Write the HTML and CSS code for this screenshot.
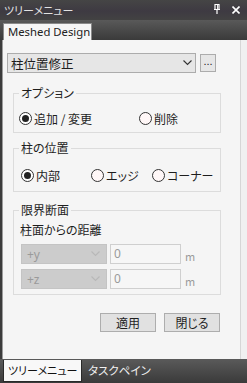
FILE: index.html
```html
<!DOCTYPE html>
<html lang="ja">
<head>
  <meta charset="UTF-8" />
  <title>ツリーメニュー</title>
  <link rel="stylesheet" href="styles.css">
</head>
<body>
  <div class="window">
    <div class="titlebar">
      <span class="title">ツリーメニュー</span>
      <span class="tools">
        <svg class="pin" width="8" height="10" viewBox="0 0 8 10">
          <path d="M2 0.5h4v5h-4z M1 5.5h6 M4 5.5v4.5" fill="none" stroke="#fff" stroke-width="1.2"/>
          <path d="M4.6 1v4.5" stroke="#fff" stroke-width="1"/>
        </svg>
        <svg class="close" width="8" height="8" viewBox="0 0 8 8">
          <path d="M0.5 0.5l7 7 M7.5 0.5l-7 7" stroke="#fff" stroke-width="1.6"/>
        </svg>
      </span>
    </div>

    <div class="tabstrip">
      <div class="tab">Meshed Design</div>
    </div>

    <div class="panel">
      <div class="content">
        <!-- コマンド選択 -->
        <div class="cmd-row">
          <div class="select main">
            <span>柱位置修正</span>
            <svg width="9" height="6" viewBox="0 0 9 6"><path d="M0.5 0.5l4 4 4-4" fill="none" stroke="#333" stroke-width="1.1"/></svg>
          </div>
          <button class="more">...</button>
        </div>

        <!-- オプション -->
        <fieldset class="group g-option">
          <legend>オプション</legend>
          <div class="radios">
            <label class="radio-item"><span class="radio checked"></span>追加 / 変更</label>
            <label class="radio-item"><span class="radio"></span>削除</label>
          </div>
        </fieldset>

        <!-- 柱の位置 -->
        <fieldset class="group g-position">
          <legend>柱の位置</legend>
          <div class="radios">
            <label class="radio-item"><span class="radio checked"></span>内部</label>
            <label class="radio-item"><span class="radio"></span>エッジ</label>
            <label class="radio-item"><span class="radio"></span>コーナー</label>
          </div>
        </fieldset>

        <!-- 限界断面 -->
        <fieldset class="group g-section">
          <legend>限界断面</legend>
          <div class="sub-label">柱面からの距離</div>
          <div class="dist-row">
            <div class="select disabled">
              <span>+y</span>
              <svg width="9" height="6" viewBox="0 0 9 6"><path d="M0.5 0.5l4 4 4-4" fill="none" stroke="#b8b8b8" stroke-width="1.1"/></svg>
            </div>
            <div class="num">0</div>
            <span class="unit">m</span>
          </div>
          <div class="dist-row">
            <div class="select disabled">
              <span>+z</span>
              <svg width="9" height="6" viewBox="0 0 9 6"><path d="M0.5 0.5l4 4 4-4" fill="none" stroke="#b8b8b8" stroke-width="1.1"/></svg>
            </div>
            <div class="num">0</div>
            <span class="unit">m</span>
          </div>
        </fieldset>

        <div class="actions">
          <button class="btn">適用</button>
          <button class="btn">閉じる</button>
        </div>
      </div>
    </div>

    <div class="bottom-tabs">
      <div class="btab active">ツリーメニュー</div>
      <div class="btab">タスクペイン</div>
    </div>
  </div>
</body>
</html>
```

FILE: styles.css
```css
body {
  margin: 0;
  background: #3c3c3c;
  font-family: "Noto Sans CJK JP", "Noto Sans", sans-serif;
  font-feature-settings: "palt";
  font-size: 12px;
  color: #1e1e1e;
}
.window {
  width: 247px;
  height: 383px;
  overflow: hidden;
}

/* タイトルバー */
.titlebar {
  height: 20px;
  background: linear-gradient(#454545, #3e3a42 55%, #424242);
  display: flex;
  align-items: center;
  justify-content: space-between;
  padding: 0 7px 0 4px;
}
.title {
  color: #e2e2e2;
  font-size: 11px;
  line-height: 20px;
}
.tools {
  display: flex;
  align-items: center;
  gap: 11px;
}
.pin {
  margin-top: -2px;
}

/* タブ */
.tabstrip {
  height: 20px;
  background: linear-gradient(#595959, #3a3a3a);
  display: flex;
  align-items: flex-end;
  padding-left: 3px;
}
.tab {
  width: 89px;
  height: 17px;
  box-sizing: border-box;
  background: #f6f6f6;
  border: 1px solid #8a8a8a;
  border-bottom: none;
  font-family: "Noto Sans", sans-serif;
  font-size: 11.3px;
  line-height: 16px;
  padding-left: 4px;
  white-space: nowrap;
  color: #222;
}

/* パネル */
.panel {
  margin-left: 2px;
  width: 245px;
  height: 319px;
  box-sizing: border-box;
  background: #f0f0f0;
  border-left: 1px solid #9c9c9c;
}
.content {
  width: 238px;
  height: 100%;
  box-sizing: border-box;
  background: #f5f5f5;
  border-right: 1px solid #d6d6d6;
  padding-top: 13px;
}
.cmd-row {
  display: flex;
  align-items: center;
  margin-left: 4px;
}
.select {
  box-sizing: border-box;
  display: flex;
  align-items: center;
  justify-content: space-between;
  border: 1px solid #acacac;
}
.select.main {
  width: 189px;
  height: 20px;
  background: #e6e6e6;
  padding: 0 3px 0 3px;
  font-size: 12.5px;
}
.more {
  margin-left: 4px;
  width: 16px;
  height: 18px;
  padding: 0 0 4px;
  border: 1px solid #acacac;
  background: #e6e6e6;
  font-size: 11px;
  line-height: 10px;
  color: #222;
}

/* グループ */
.group {
  margin: 13px 0 0 10px;
  width: 208px;
  box-sizing: border-box;
  border: 1px solid #dcdcdc;
  padding: 0 5px 6px;
  min-width: 0;
}
.group legend {
  padding: 0 2px;
  font-size: 12px;
  line-height: 14px;
}
.radios {
  display: grid;
  align-items: center;
  height: 16px;
}
.g-option .radios {
  margin-top: 10px;
  grid-template-columns: 120px auto;
}
.g-position {
  margin-top: 8px;
  padding-bottom: 8px;
}
.g-position .radios {
  margin-top: 12px;
  margin-left: 2px;
  grid-template-columns: 70px 61px auto;
}
.radio-item {
  display: flex;
  align-items: center;
  white-space: nowrap;
}
.radio {
  width: 13px;
  height: 13px;
  box-sizing: border-box;
  border: 1px solid #333;
  border-radius: 50%;
  background: #fff7f7;
  margin-right: 2px;
  position: relative;
}
.radio.checked {
  background: #fff;
}
.radio.checked::after {
  content: "";
  position: absolute;
  left: 2px;
  top: 2px;
  width: 7px;
  height: 7px;
  border-radius: 50%;
  background: #222;
}

/* 限界断面 */
.g-section {
  margin-top: 11px;
  padding-bottom: 5px;
}
.sub-label {
  margin-top: 5px;
  margin-left: 1px;
  line-height: 16px;
}
.dist-row {
  display: flex;
  align-items: center;
  margin-top: 6px;
  margin-left: 2px;
}
.dist-row + .dist-row {
  margin-top: 5px;
}
.select.disabled {
  width: 86px;
  height: 20px;
  background: #cccccc;
  border-color: #c4c4c4;
  color: #9a9a9a;
  padding: 0 6px 0 5px;
  font-family: "Noto Sans", sans-serif;
}
.num {
  margin-left: 3px;
  width: 71px;
  height: 20px;
  box-sizing: border-box;
  border: 1px solid #cfcfcf;
  background: #f6f6f6;
  color: #9a9a9a;
  line-height: 18px;
  padding-left: 3px;
  font-family: "Noto Sans", sans-serif;
}
.unit {
  margin-left: 4px;
  margin-top: 4px;
  color: #9a9a9a;
  font-size: 11px;
}

/* ボタン */
.actions {
  display: flex;
  margin: 18px 0 0 97px;
  gap: 8px;
}
.btn {
  width: 56px;
  height: 19px;
  padding: 0;
  border: 1px solid #adadad;
  background: #e1e1e1;
  font-family: inherit;
  font-feature-settings: "palt";
  font-size: 12px;
  line-height: 16px;
  color: #1e1e1e;
}

/* 下タブ */
.bottom-tabs {
  height: 24px;
  background: linear-gradient(#5a5a5a, #3a3a3a);
  display: flex;
  align-items: flex-start;
  padding: 1px 0 0 3px;
  box-sizing: border-box;
}
.btab {
  color: #f0f0f0;
  font-size: 11.5px;
  line-height: 20px;
  margin-left: 6px;
  white-space: nowrap;
}
.btab.active {
  margin-left: 0;
  width: 79px;
  height: 22px;
  box-sizing: border-box;
  background: #f8f8f8;
  border: 1px solid #2a2a2a;
  border-top: none;
  color: #111;
  font-size: 11px;
  padding-left: 4px;
}
```
